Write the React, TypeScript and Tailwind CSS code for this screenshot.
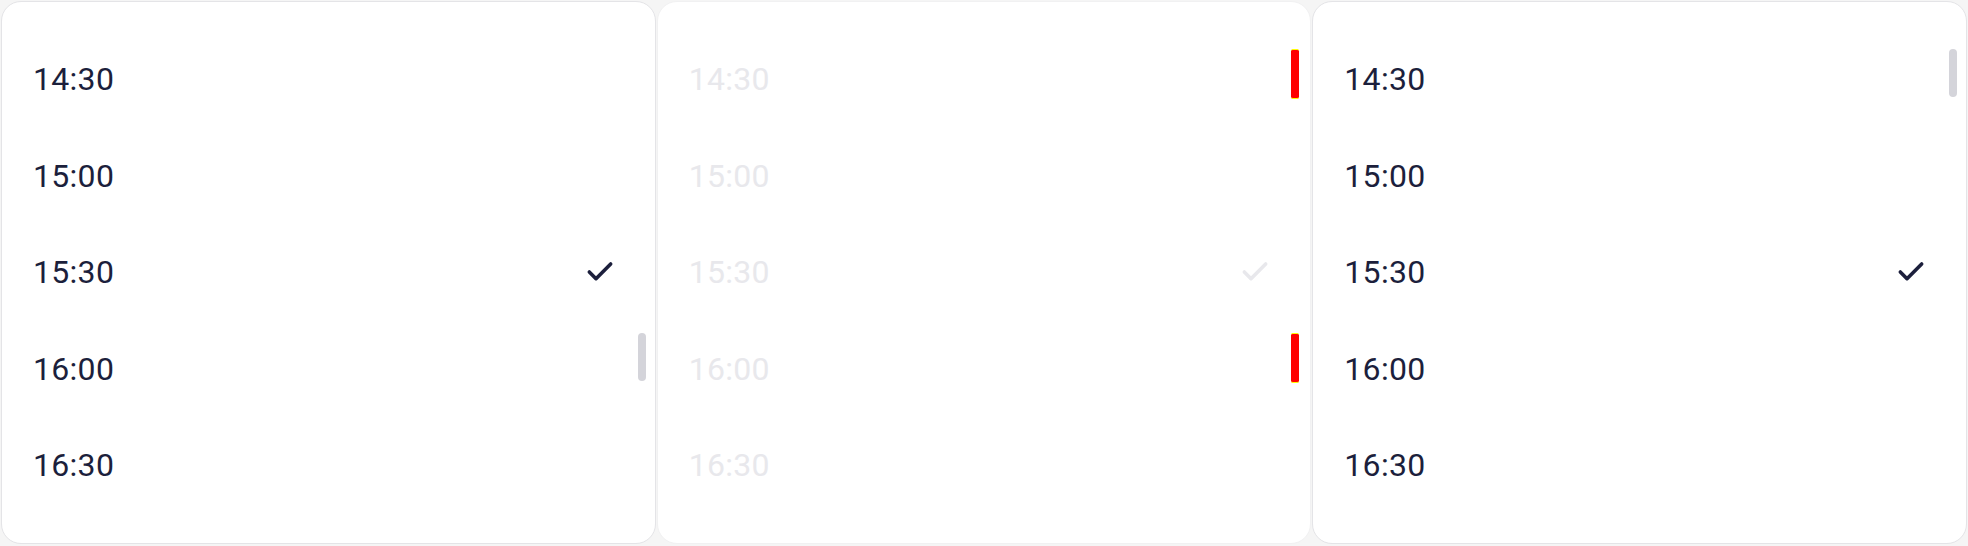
import { Check } from 'lucide-react';

const times = ['14:30', '15:00', '15:30', '16:00', '16:30'];
const selected = '15:30';

type PanelProps = {
  faded?: boolean;
  thumbs: number[];
  forced?: boolean;
};

const TimePanel = ({ faded = false, thumbs, forced = false }: PanelProps) => {
  return (
    <div
      className={`relative h-[543px] rounded-[20px] border bg-white ${
        faded ? 'border-[#f1f1f2]' : 'border-[#e4e4e7]'
      }`}
    >
      <ul className="pt-[29px]">
        {times.map(time => (
          <li
            key={time}
            className="flex h-[96.5px] items-center justify-between pl-[31px] pr-[39px]"
          >
            <span
              className={`text-[32px] leading-none tracking-[0.3px] ${
                faded ? 'text-[#e8e8ec]' : 'text-[#1c1f3c]'
              }`}
              style={{ fontFamily: 'Roboto, "Noto Sans", sans-serif' }}
            >
              {time}
            </span>
            {time === selected && (
              <Check
                size={32}
                strokeWidth={2.7}
                className={faded ? 'text-[#e8e8ec]' : 'text-[#1c1f3c]'}
              />
            )}
          </li>
        ))}
      </ul>

      {/* scroll thumbs */}
      {thumbs.map(top =>
        forced ? (
          <div
            key={top}
            className="absolute right-[11px] w-2 rounded-[2px] border-y border-[#ffff00] bg-[#ff0000]"
            style={{ top: top - 1, height: 50 }}
          />
        ) : (
          <div
            key={top}
            className="absolute right-[9px] w-2 rounded-full bg-[#d4d4da]"
            style={{ top: top - 1, height: 48 }}
          />
        )
      )}
    </div>
  );
};

const App = () => {
  return (
    <div className="h-[546px] w-[1968px] bg-[#f5f5f5] px-px pt-px">
      <div className="grid grid-cols-3 gap-px">
        <TimePanel thumbs={[332]} />
        <TimePanel faded forced thumbs={[48, 332]} />
        <TimePanel thumbs={[48]} />
      </div>
    </div>
  );
};

export default App;
